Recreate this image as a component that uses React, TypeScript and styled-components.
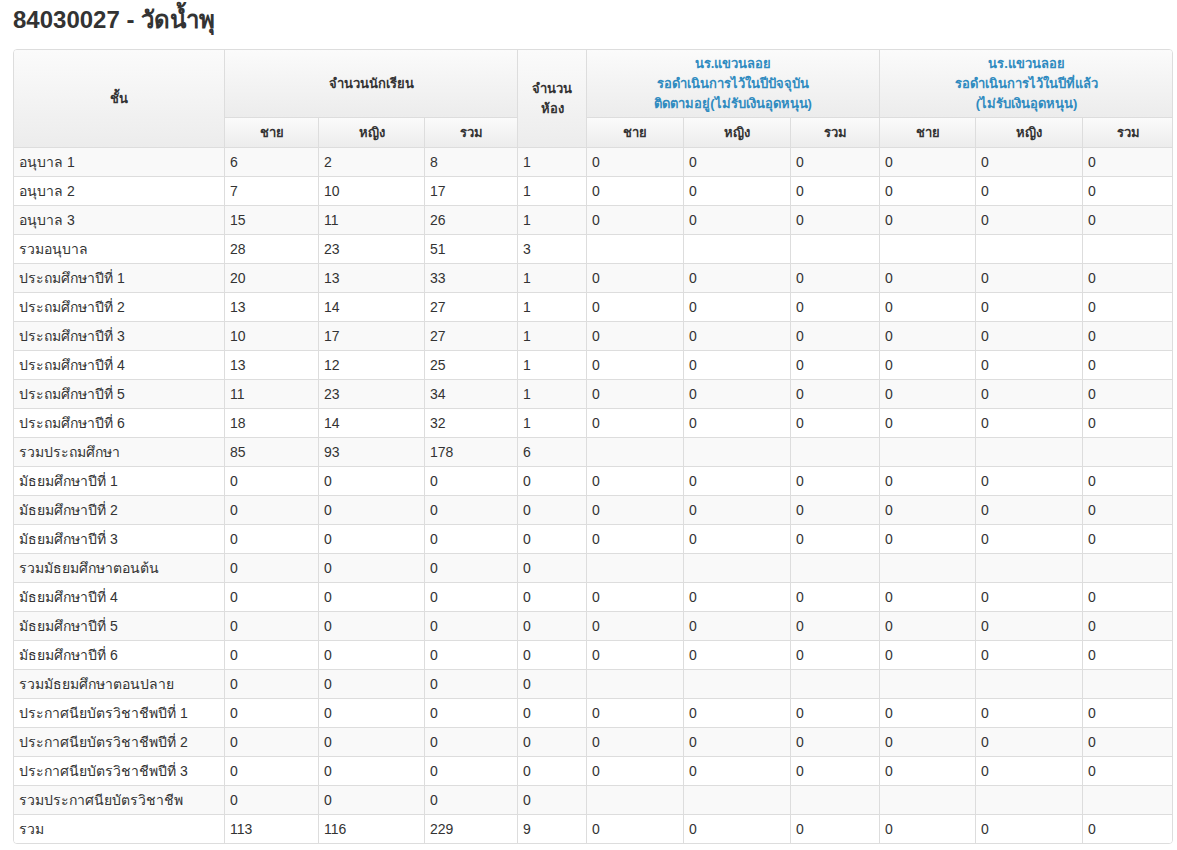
import React from 'react'
import styled, { createGlobalStyle } from 'styled-components'

const GlobalStyle = createGlobalStyle`
  html, body {
    margin: 0;
    padding: 0;
    background: #fff;
  }
  body {
    font-family: "Liberation Sans", "Noto Sans", "DejaVu Sans", sans-serif;
    font-size: 14px;
    color: #333;
  }
`

const Page = styled.div`
  padding: 6px 0 8px 13px;
  width: 1160px;
`

const Title = styled.h3`
  margin: 0 0 15px;
  font-size: 24px;
  line-height: 28px;
  font-weight: bold;
  color: #333;
`

const Panel = styled.div`
  border: 1px solid #ddd;
  border-radius: 4px;
  overflow: hidden;
`

const Table = styled.table`
  width: 100%;
  table-layout: fixed;
  border-collapse: separate;
  border-spacing: 0;

  tr > *:last-child {
    border-right: none;
  }
  tbody tr:last-child td {
    border-bottom: none;
  }
`

const Head = styled.th<{ $blue?: boolean; $tall?: boolean }>`
  padding: ${(p) => (p.$tall ? '4px 5px 3px' : '5px 5px 4px')};
  line-height: 20px;
  font-size: 13px;
  font-weight: bold;
  text-align: center;
  vertical-align: middle;
  color: ${(p) => (p.$blue ? '#2f8bc0' : '#333')};
  background: linear-gradient(to bottom, #fbfbfb 0%, #ececec 100%);
  border-right: 1px solid #ddd;
  border-bottom: 1px solid #ddd;
  white-space: nowrap;
`

const Row = styled.tr`
  &:nth-child(odd) td {
    background: #f9f9f9;
  }
`

const Cell = styled.td`
  padding: 4px 5px;
  line-height: 20px;
  height: 20px;
  border-right: 1px solid #ddd;
  border-bottom: 1px solid #ddd;
  white-space: nowrap;
  overflow: hidden;
  background: #fff;
`

const widths = [211, 94, 106, 93, 69, 97, 107, 89, 96, 107, 90]

type Line = { name: string; n: (number | null)[] }

const z = [0, 0, 0, 0, 0, 0, 0, 0, 0, 0]
const sum = (a: number, b: number, c: number, d: number): (number | null)[] => [a, b, c, d, null, null, null, null, null, null]
const lvl = (a: number, b: number, c: number, d: number): (number | null)[] => [a, b, c, d, 0, 0, 0, 0, 0, 0]

const rows: Line[] = [
  { name: 'อนุบาล 1', n: lvl(6, 2, 8, 1) },
  { name: 'อนุบาล 2', n: lvl(7, 10, 17, 1) },
  { name: 'อนุบาล 3', n: lvl(15, 11, 26, 1) },
  { name: 'รวมอนุบาล', n: sum(28, 23, 51, 3) },
  { name: 'ประถมศึกษาปีที่ 1', n: lvl(20, 13, 33, 1) },
  { name: 'ประถมศึกษาปีที่ 2', n: lvl(13, 14, 27, 1) },
  { name: 'ประถมศึกษาปีที่ 3', n: lvl(10, 17, 27, 1) },
  { name: 'ประถมศึกษาปีที่ 4', n: lvl(13, 12, 25, 1) },
  { name: 'ประถมศึกษาปีที่ 5', n: lvl(11, 23, 34, 1) },
  { name: 'ประถมศึกษาปีที่ 6', n: lvl(18, 14, 32, 1) },
  { name: 'รวมประถมศึกษา', n: sum(85, 93, 178, 6) },
  { name: 'มัธยมศึกษาปีที่ 1', n: z },
  { name: 'มัธยมศึกษาปีที่ 2', n: z },
  { name: 'มัธยมศึกษาปีที่ 3', n: z },
  { name: 'รวมมัธยมศึกษาตอนต้น', n: sum(0, 0, 0, 0) },
  { name: 'มัธยมศึกษาปีที่ 4', n: z },
  { name: 'มัธยมศึกษาปีที่ 5', n: z },
  { name: 'มัธยมศึกษาปีที่ 6', n: z },
  { name: 'รวมมัธยมศึกษาตอนปลาย', n: sum(0, 0, 0, 0) },
  { name: 'ประกาศนียบัตรวิชาชีพปีที่ 1', n: z },
  { name: 'ประกาศนียบัตรวิชาชีพปีที่ 2', n: z },
  { name: 'ประกาศนียบัตรวิชาชีพปีที่ 3', n: z },
  { name: 'รวมประกาศนียบัตรวิชาชีพ', n: sum(0, 0, 0, 0) },
  { name: 'รวม', n: [113, 116, 229, 9, 0, 0, 0, 0, 0, 0] },
]

const SubHeads = () => (
  <>
    <Head>ชาย</Head>
    <Head>หญิง</Head>
    <Head>รวม</Head>
  </>
)

export default function App() {
  return (
    <Page>
      <GlobalStyle />
      <Title>84030027 - วัดน้ำพุ</Title>
      <Panel>
        <Table>
          <colgroup>
            {widths.map((w, i) => (
              <col key={i} style={{ width: w }} />
            ))}
          </colgroup>
          <thead>
            <tr>
              <Head rowSpan={2}>ชั้น</Head>
              <Head colSpan={3} $tall>จำนวนนักเรียน</Head>
              <Head rowSpan={2}>
                จำนวน
                <br />
                ห้อง
              </Head>
              <Head colSpan={3} $blue $tall>
                นร.แขวนลอย
                <br />
                รอดำเนินการไว้ในปีปัจจุบัน
                <br />
                ติดตามอยู่(ไม่รับเงินอุดหนุน)
              </Head>
              <Head colSpan={3} $blue $tall>
                นร.แขวนลอย
                <br />
                รอดำเนินการไว้ในปีที่แล้ว
                <br />
                (ไม่รับเงินอุดหนุน)
              </Head>
            </tr>
            <tr>
              <SubHeads />
              <SubHeads />
              <SubHeads />
            </tr>
          </thead>
          <tbody>
            {rows.map((r) => (
              <Row key={r.name}>
                <Cell>{r.name}</Cell>
                {r.n.map((v, i) => (
                  <Cell key={i}>{v}</Cell>
                ))}
              </Row>
            ))}
          </tbody>
        </Table>
      </Panel>
    </Page>
  )
}
